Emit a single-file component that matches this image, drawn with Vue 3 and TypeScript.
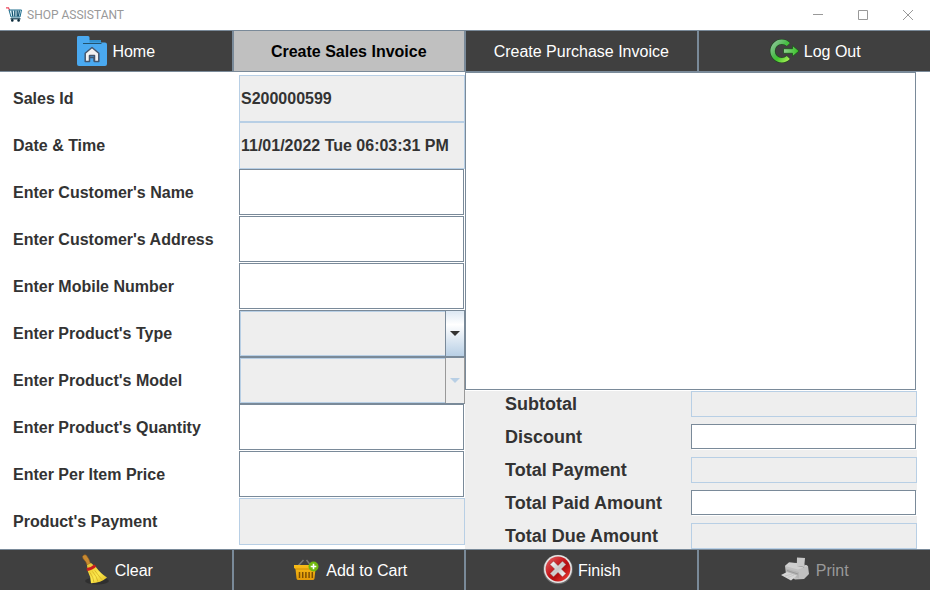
<script setup lang="ts">
import { reactive, ref } from 'vue'

interface Field {
  id: string
  label: string
  kind: 'text' | 'readonly' | 'select'
  disabled?: boolean
}

const active = ref('sales')

const values = reactive<Record<string, string>>({
  salesId: 'S200000599',
  dateTime: '11/01/2022 Tue 06:03:31 PM',
})

const fields: Field[] = [
  { id: 'salesId', label: 'Sales Id', kind: 'readonly' },
  { id: 'dateTime', label: 'Date & Time', kind: 'readonly' },
  { id: 'customerName', label: "Enter Customer's Name", kind: 'text' },
  { id: 'customerAddress', label: "Enter Customer's Address", kind: 'text' },
  { id: 'mobile', label: 'Enter Mobile Number', kind: 'text' },
  { id: 'productType', label: "Enter Product's Type", kind: 'select' },
  { id: 'productModel', label: "Enter Product's Model", kind: 'select', disabled: true },
  { id: 'quantity', label: "Enter Product's Quantity", kind: 'text' },
  { id: 'itemPrice', label: 'Enter Per Item Price', kind: 'text' },
  { id: 'payment', label: "Product's Payment", kind: 'readonly' },
]

const totals: Field[] = [
  { id: 'subtotal', label: 'Subtotal', kind: 'readonly' },
  { id: 'discount', label: 'Discount', kind: 'text' },
  { id: 'totalPayment', label: 'Total Payment', kind: 'readonly' },
  { id: 'totalPaid', label: 'Total Paid Amount', kind: 'text' },
  { id: 'totalDue', label: 'Total Due Amount', kind: 'readonly' },
]
</script>

<template>
  <div class="window">
    <header class="titlebar">
      <svg class="app-icon" viewBox="0 0 16 16" aria-hidden="true">
        <path d="M0 .8h2.500l1 2.500" fill="none" stroke="#f0475c" stroke-width="1.200" />
        <path d="M3 3h12.500l-1.500 7H5z" fill="#e2f5fa" stroke="#1e6d8c" stroke-width="1" />
        <path d="M6 3.500l.8 6M8.800 3.500v6M11.200 3.500v6M13.400 3.500l-1 6" stroke="#12506d" stroke-width="1.300" />
        <path d="M4.500 11.800h10" stroke="#123c50" stroke-width="1.200" />
        <circle cx="6.300" cy="13.400" r="1.300" fill="#0b2a3a" />
        <circle cx="12.600" cy="13.400" r="1.300" fill="#0b2a3a" />
      </svg>
      <span class="app-name">SHOP ASSISTANT</span>
      <div class="window-buttons">
        <button type="button" aria-label="Minimize">
          <svg viewBox="0 0 12 12"><path d="M1 5.500h10" /></svg>
        </button>
        <button type="button" aria-label="Maximize">
          <svg viewBox="0 0 12 12"><path d="M1.500 1.500h9v9h-9z" /></svg>
        </button>
        <button type="button" aria-label="Close">
          <svg viewBox="0 0 12 12"><path d="M1 1l10 10M11 1L1 11" /></svg>
        </button>
      </div>
    </header>

    <nav class="bar bar-top">
      <button type="button" class="bar-button" @click="active = 'home'">
        <svg class="icon" viewBox="0 0 32 32" aria-hidden="true">
          <path d="M12 5h13v4H12z" fill="#3090cf" />
          <path d="M2 1h10q1.500 0 1.500 1.500V7.500H29q2 0 2 2V29q0 2-2 2H3q-2 0-2-2V2.500Q1 1 2 1z" fill="#4aa9f0" />
          <path d="M7 8.500h18.500" stroke="#22536f" stroke-width="1" />
          <path d="M9.200 18.200L16 12.500l6.800 5.700v8.300h-4.300v-6h-5v6H9.200z" fill="#f2f2f2" stroke="#43566e" stroke-width="1.500" stroke-linejoin="round" />
          <path d="M13.500 22.500h4.500v4" fill="none" stroke="#43566e" stroke-width="1.300" />
        </svg>
        Home
      </button>
      <button type="button" class="bar-button" :class="{ active: active === 'sales' }" @click="active = 'sales'">
        Create Sales Invoice
      </button>
      <button type="button" class="bar-button" @click="active = 'purchase'">Create Purchase Invoice</button>
      <button type="button" class="bar-button">
        <svg class="icon" viewBox="0 0 32 32" aria-hidden="true">
          <defs>
            <linearGradient id="ring" x1="0" y1="0" x2="1" y2="1">
              <stop offset="0" stop-color="#8fc79a" />
              <stop offset=".45" stop-color="#4cbb4c" />
              <stop offset=".6" stop-color="#3fc52f" />
              <stop offset="1" stop-color="#a6ee55" />
            </linearGradient>
            <linearGradient id="arrow" x1="0" y1="0" x2="1" y2="0">
              <stop offset="0" stop-color="#8fd08f" />
              <stop offset="1" stop-color="#35c322" />
            </linearGradient>
          </defs>
          <path d="M20.300 9.500A9.200 9.200 0 1 0 20.300 22.500" fill="none" stroke="#1c4a1c" stroke-width="5.600" />
          <path d="M20.300 9.500A9.200 9.200 0 1 0 20.300 22.500" fill="none" stroke="url(#ring)" stroke-width="4.400" />
          <path d="M15.500 13.700h9v-3.200l6.500 5.500-6.500 5.500v-3.200h-9z" fill="url(#arrow)" stroke="#1c501c" stroke-width=".8" />
        </svg>
        Log Out
      </button>
    </nav>

    <main class="content">
      <form class="invoice" @submit.prevent>
        <div v-for="field in fields" :key="field.id" class="row">
          <label :for="field.id">{{ field.label }}</label>
          <div v-if="field.kind === 'select'" class="combo" :class="{ off: field.disabled }">
            <select :id="field.id" v-model="values[field.id]" :disabled="field.disabled"></select>
            <span class="combo-arrow">
              <svg viewBox="0 0 10 5" aria-hidden="true"><path d="M0 0h10L5 5z" /></svg>
            </span>
          </div>
          <input
            v-else
            :id="field.id"
            v-model="values[field.id]"
            type="text"
            class="field"
            :class="{ locked: field.kind === 'readonly' }"
            :readonly="field.kind === 'readonly'"
          />
        </div>
      </form>

      <section class="side">
        <textarea class="preview" aria-label="Invoice items" readonly></textarea>
        <div class="totals">
          <div v-for="field in totals" :key="field.id" class="total">
            <label :for="field.id">{{ field.label }}</label>
            <input
              :id="field.id"
              v-model="values[field.id]"
              type="text"
              class="field"
              :class="{ locked: field.kind === 'readonly' }"
              :readonly="field.kind === 'readonly'"
            />
          </div>
        </div>
      </section>
    </main>

    <footer class="bar bar-bottom">
      <button type="button" class="bar-button">
        <svg class="icon" viewBox="0 0 32 32" aria-hidden="true">
          <defs>
            <linearGradient id="bristle" x1="0" y1="0" x2="1" y2="1">
              <stop offset="0" stop-color="#e8c62c" />
              <stop offset=".5" stop-color="#fbe94e" />
              <stop offset="1" stop-color="#e0b81c" />
            </linearGradient>
          </defs>
          <ellipse cx="18" cy="27" rx="12" ry="3.500" fill="#2f2f2f" />
          <path d="M3.500 2.500q1-2.500 3.700-1.500 3 3.500 4.300 8.500l-3.500 1.500Q7.500 8 4 4.500z" fill="#c98a32" stroke="#8a5a1c" stroke-width=".6" />
          <path d="M8 11l4-2 3.500 3-7 3.500z" fill="#e8c93a" />
          <path d="M8.500 16.500l8-4q5 7 11.500 11-6 5.500-16 5.800Q12 23 8.500 16.500z" fill="url(#bristle)" />
          <path d="M11 18.500q3.500 5 4 10M13.500 17.500q4 4.500 5.500 10M15.800 16.500q3.500 5 7 9" fill="none" stroke="#c9a01a" stroke-width=".6" />
          <path d="M7.800 15.500q5-.5 8.500-4" fill="none" stroke="#c81e1e" stroke-width="3" />
        </svg>
        Clear
      </button>
      <button type="button" class="bar-button">
        <svg class="icon" viewBox="0 0 32 32" aria-hidden="true">
          <defs>
            <linearGradient id="basket" x1="0" y1="0" x2="0" y2="1">
              <stop offset="0" stop-color="#f9bd18" />
              <stop offset="1" stop-color="#e39a08" />
            </linearGradient>
          </defs>
          <path d="M7 13l6.500-7M22 13l-5.500-7" stroke="#777" stroke-width="1.500" />
          <path d="M4 11h23v3l-1.500 1-1 9.500q-.2 1.500-2 1.500h-14q-1.800 0-2-1.500l-1-9.500L4 14z" fill="url(#basket)" />
          <path d="M5.500 15h20" stroke="#c98806" stroke-width=".8" />
          <path d="M9.500 18v6M12.700 18v6M15.900 18v6M19.100 18v6M22.300 18v6" stroke="#7c4f04" stroke-width="1.500" />
          <circle cx="23.500" cy="12.500" r="5" fill="#6fb80e" />
          <path d="M23.500 9.700v5.600M20.700 12.500h5.600" stroke="#fff" stroke-width="1.600" />
        </svg>
        Add to Cart
      </button>
      <button type="button" class="bar-button">
        <svg class="icon" viewBox="0 0 32 32" aria-hidden="true">
          <defs>
            <linearGradient id="red" x1="0" y1="0" x2="1" y2="1">
              <stop offset="0" stop-color="#e2686b" />
              <stop offset=".45" stop-color="#c5161a" />
              <stop offset=".6" stop-color="#b40d10" />
              <stop offset="1" stop-color="#ff4a40" />
            </linearGradient>
            <linearGradient id="cross" x1="0" y1="0" x2="1" y2="1">
              <stop offset="0" stop-color="#ffffff" />
              <stop offset=".5" stop-color="#c9c9c9" />
              <stop offset="1" stop-color="#ffffff" />
            </linearGradient>
          </defs>
          <circle cx="16" cy="15.500" r="14.800" fill="#6b6b6b" />
          <circle cx="16" cy="15" r="14" fill="#e4e4e4" />
          <circle cx="16" cy="15" r="12.400" fill="url(#red)" />
          <path d="M11.500 7l4.500 4.500L20.500 7 24 10.500 19.500 15l4.500 4.500-3.500 3.500-4.500-4.500-4.500 4.500L8 19.500l4.500-4.500L8 10.500z" fill="url(#cross)" stroke="#8d2222" stroke-width=".5" />
        </svg>
        Finish
      </button>
      <button type="button" class="bar-button" disabled>
        <svg class="icon" viewBox="0 0 32 32" aria-hidden="true">
          <path d="M17 3.500l8 .5-.8 9-7.400-1z" fill="#c8c8c8" />
          <path d="M5 12l4-3.500 8 .5v3l7 1.500.3-3 3.700 1.500 1 8-5 5-9 .5L6 20z" fill="#c0c0c0" />
          <path d="M5 12l13 3.500 9.500-3.500-1.500-1-2 2-7-.8v-3L9 8.500z" fill="#d0d0d0" />
          <path d="M6 14.500l13 3.500v6.500L6 19.500z" fill="#b4b4b4" />
          <path d="M7 16.500l11 3.500" stroke="#999" stroke-width="1" />
          <path d="M1 21l6-3 10 3.500-6 5z" fill="#d6d6d6" />
          <path d="M5 22l7-2M8 23.500l6-2.500" stroke="#bdbdbd" stroke-width=".7" />
        </svg>
        Print
      </button>
    </footer>
  </div>
</template>

<style>
body {
  background: #fff;
}
</style>

<style scoped>
.window {
  display: flex;
  flex-direction: column;
  min-height: 100vh;
  font-family: "Liberation Sans", Arial, sans-serif;
  color: #333;
  background: #fff;
}

.window *,
.window {
  box-sizing: border-box;
}

button,
input,
select,
textarea {
  margin: 0;
  font: inherit;
  border-radius: 0;
  outline: none;
}

.titlebar {
  display: flex;
  align-items: center;
  height: 30px;
  padding-left: 6px;
  gap: 5px;
}

.app-icon {
  width: 16px;
  height: 16px;
}

.app-name {
  font-family: Roboto, sans-serif;
  font-size: 12px;
  line-height: 16px;
  color: #999;
}

.window-buttons {
  display: flex;
  margin-left: auto;
}

.window-buttons button {
  display: flex;
  align-items: center;
  justify-content: center;
  width: 45px;
  height: 28px;
  padding: 0;
  border: 0;
  background: none;
}

.window-buttons svg {
  width: 12px;
  height: 12px;
  fill: none;
  stroke: #999;
  stroke-width: 1;
}

.bar {
  display: grid;
  grid-template-columns: repeat(4, 1fr);
  background: #404040;
  border-top: 1px solid #7a8a99;
}

.bar-top {
  height: 42px;
  border-bottom: 1px solid #7a8a99;
}

.bar-bottom {
  height: 41px;
}

.bar-button {
  display: flex;
  align-items: center;
  justify-content: center;
  gap: 4px;
  padding: 2px 0 0;
  border: 0 solid #7a8a99;
  border-width: 0 1px;
  background: #404040;
  color: #fff;
  font-size: 16px;
  line-height: 20px;
}

.bar-button:first-child {
  border-left: 0;
}

.bar-button:last-child {
  border-right: 0;
}

.bar-button.active {
  background: #c0c0c0;
  color: #000;
  font-weight: bold;
}

.bar-button:disabled {
  color: #999;
}

.icon {
  width: 32px;
  height: 32px;
  margin-top: -2px;
}

.content {
  display: grid;
  grid-template-columns: 1fr 1fr;
  flex: 1;
}

.invoice {
  padding-top: 3px;
  padding-bottom: 4px;
}

.row {
  display: grid;
  grid-template-columns: 239px 1fr;
  align-items: center;
  height: 47px;
}

.row label {
  padding-left: 13px;
}

.row,
.total {
  font-size: 16px;
  font-weight: bold;
}

.field {
  align-self: stretch;
  min-width: 0;
  margin: 0 1px 1px 0;
  padding: 0 1px;
  border: 1px solid #7a8a99;
  background: #fff;
  box-shadow: 1px 1px 0 #fff;
  color: #333;
}

.field.locked {
  margin: 0;
  border-color: #b8cfe5;
  background: #eee;
  box-shadow: none;
}

.combo {
  position: relative;
  align-self: stretch;
  display: flex;
  border: 1px solid #7a8a99;
}

.combo select {
  flex: 1;
  appearance: none;
  padding: 0 20px 0 4px;
  border: 1px solid #b8cfe5;
  background: #eee;
  color: #333;
  opacity: 1;
}

.combo-arrow {
  position: absolute;
  top: 0;
  right: 0;
  bottom: 0;
  display: flex;
  align-items: center;
  justify-content: center;
  width: 19px;
  border-left: 1px solid #7a8a99;
  background: linear-gradient(#dde8f3, #fff 30%, #b8cfe5);
  pointer-events: none;
}

.combo-arrow svg {
  width: 10px;
  height: 5px;
  fill: #333;
}

.combo.off {
  border-right-color: #999;
}

.combo.off .combo-arrow {
  border-color: #999;
  background: #eee;
}

.combo.off .combo-arrow svg {
  fill: #b8cfe5;
}

.side {
  display: flex;
  flex-direction: column;
  padding-right: 13px;
}

.preview {
  flex: 1;
  min-height: 0;
  margin: 0 1px 1px 0;
  border: 1px solid #7a8a99;
  background: #fff;
  color: #333;
  resize: none;
}

.totals {
  display: grid;
  gap: 7px;
  background: #eee;
}

.total {
  display: grid;
  grid-template-columns: 1fr 1fr;
  align-items: center;
  height: 26px;
  font-size: 18px;
}

.total label {
  padding-left: 40px;
}
</style>
